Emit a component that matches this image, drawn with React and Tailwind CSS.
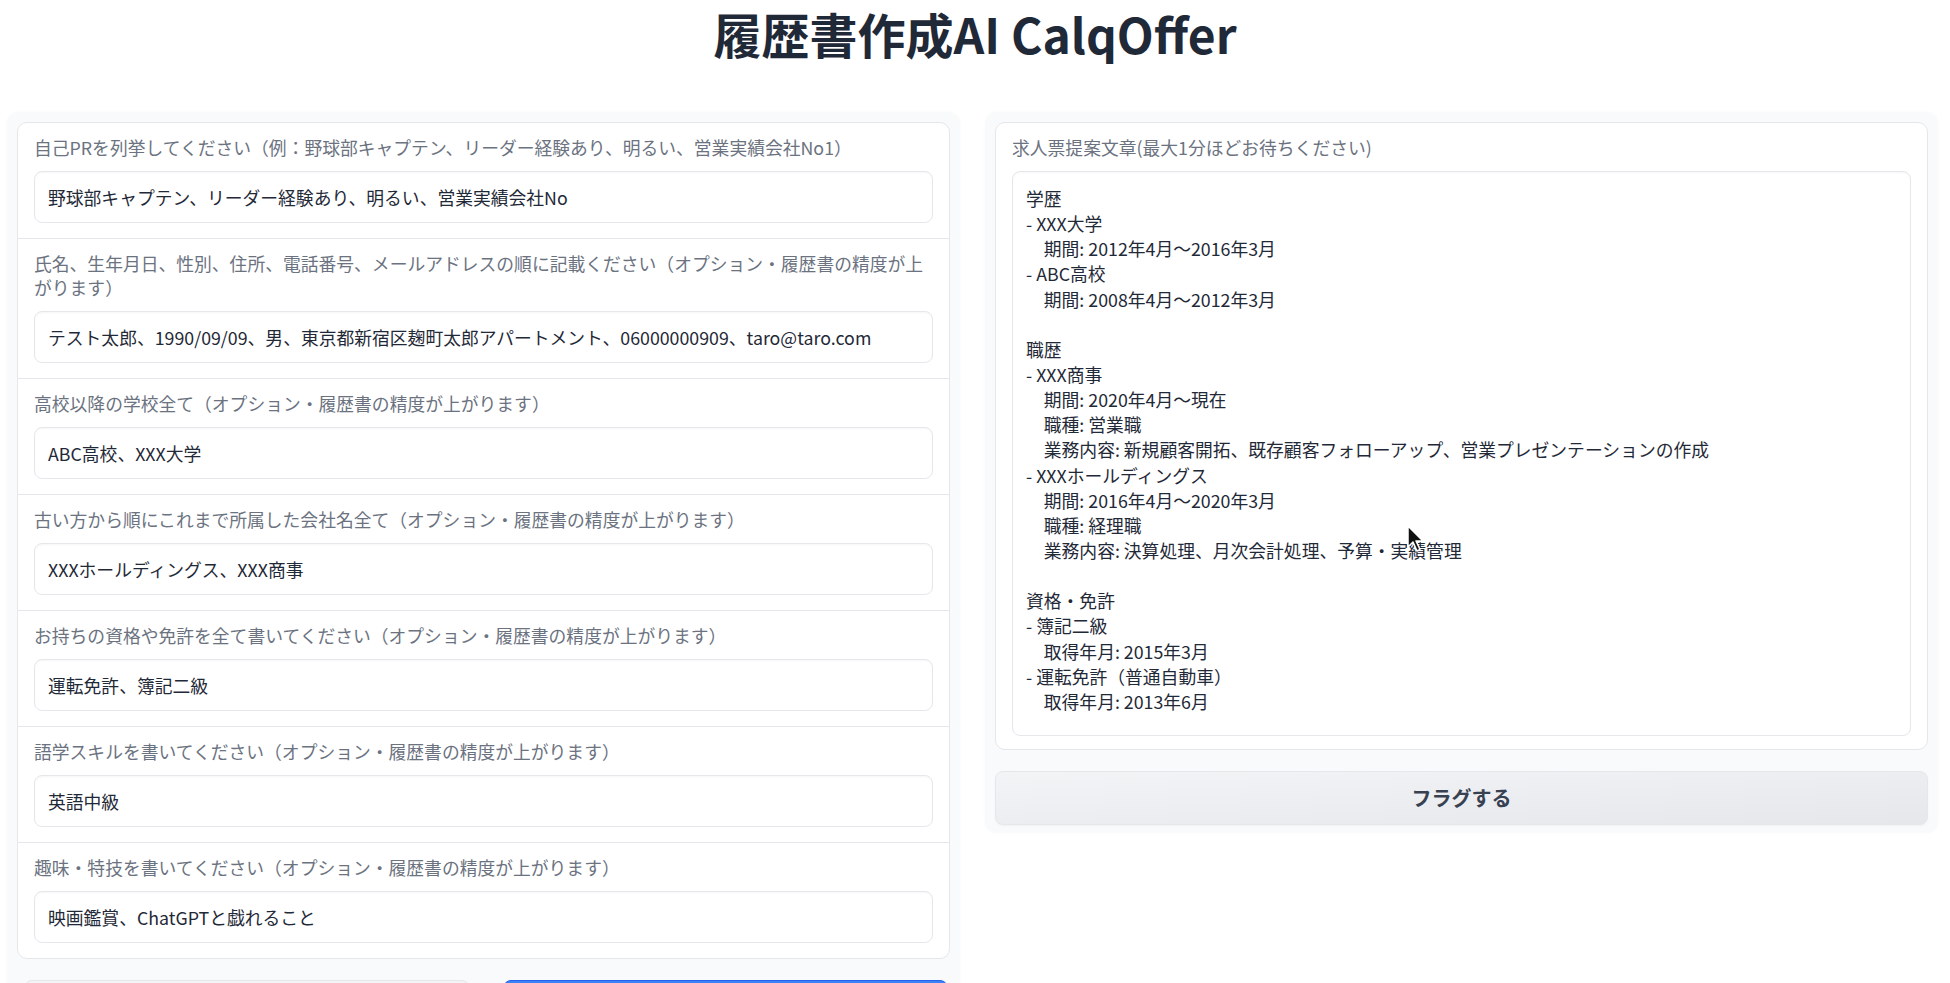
import { useState } from 'react';

const fields = [
  {
    label: '自己PRを列挙してください（例：野球部キャプテン、リーダー経験あり、明るい、営業実績会社No1）',
    value: '野球部キャプテン、リーダー経験あり、明るい、営業実績会社No',
  },
  {
    label: '氏名、生年月日、性別、住所、電話番号、メールアドレスの順に記載ください（オプション・履歴書の精度が上がります）',
    value: 'テスト太郎、1990/09/09、男、東京都新宿区麹町太郎アパートメント、06000000909、taro@taro.com',
  },
  { label: '高校以降の学校全て（オプション・履歴書の精度が上がります）', value: 'ABC高校、XXX大学' },
  { label: '古い方から順にこれまで所属した会社名全て（オプション・履歴書の精度が上がります）', value: 'XXXホールディングス、XXX商事' },
  { label: 'お持ちの資格や免許を全て書いてください（オプション・履歴書の精度が上がります）', value: '運転免許、簿記二級' },
  { label: '語学スキルを書いてください（オプション・履歴書の精度が上がります）', value: '英語中級' },
  { label: '趣味・特技を書いてください（オプション・履歴書の精度が上がります）', value: '映画鑑賞、ChatGPTと戯れること' },
];

const output = [
  '学歴',
  '- XXX大学',
  '　期間: 2012年4月～2016年3月',
  '- ABC高校',
  '　期間: 2008年4月～2012年3月',
  '',
  '職歴',
  '- XXX商事',
  '　期間: 2020年4月～現在',
  '　職種: 営業職',
  '　業務内容: 新規顧客開拓、既存顧客フォローアップ、営業プレゼンテーションの作成',
  '- XXXホールディングス',
  '　期間: 2016年4月～2020年3月',
  '　職種: 経理職',
  '　業務内容: 決算処理、月次会計処理、予算・実績管理',
  '',
  '資格・免許',
  '- 簿記二級',
  '　取得年月: 2015年3月',
  '- 運転免許（普通自動車）',
  '　取得年月: 2013年6月',
];

const Field = ({ label, value, last }) => (
  <div className={last ? 'px-[16px] pt-[12px] pb-[15px]' : 'border-b border-[#e5e7eb] px-[16px] pt-[12px] pb-[15px]'}>
    <span className="block text-[17.8px] leading-[24px] text-[#6b7280]">{label}</span>
    <div className="mt-[12px] flex h-[52px] items-center rounded-[8px] border border-[#e5e7eb] bg-white px-[13px] text-[17.8px] text-[#1f2937] shadow-[inset_0_1px_2px_rgba(0,0,0,0.04)]">
      {value}
    </div>
  </div>
);

const Cursor = () => (
  <svg className="absolute left-[394px] top-[353px]" width="18" height="28" viewBox="0 0 18 28">
    <path d="M1 1 L1 22 L6 17 L10 26 L13 24.5 L9 16 L16 16 Z" fill="#111" stroke="#fff" strokeWidth="1.5" strokeLinejoin="round" />
  </svg>
);

export default function App() {
  const [values] = useState(fields);

  return (
    <div className="min-h-screen bg-white font-['Noto_Sans_CJK_JP',sans-serif] text-[#1f2937]">
      <h1 className="text-center text-[48px] font-bold leading-[66px] text-[#1f2937]">履歴書作成AI CalqOffer</h1>

      <div className="mt-[46px] flex items-start gap-[25px] pl-[7px] pr-[12px]">
        {/* Input column */}
        <div className="w-[953px] rounded-[12px] bg-[#f9fafb] p-[10px] shadow-[0_0_3px_rgba(0,0,0,0.03)]">
          <div className="rounded-[10px] border border-[#e5e7eb] bg-white">
            {values.map((f, i) => (
              <Field key={i} label={f.label} value={f.value} last={i === values.length - 1} />
            ))}
          </div>
          <div className="mt-[21px] flex gap-[33px] pl-[7px] pr-[2px]">
            <button className="h-[54px] flex-1 rounded-[8px] border border-[#e5e7eb] bg-[#f3f4f6] text-[20px] font-bold text-[#374151]">
              クリア
            </button>
            <button className="h-[54px] flex-1 rounded-[8px] border border-[#2563eb] bg-[#3b82f6] text-[20px] font-bold text-white">
              送信
            </button>
          </div>
        </div>

        {/* Output column */}
        <div className="w-[953px] rounded-[12px] bg-[#f9fafb] px-[10px] pt-[10px] pb-[8px] shadow-[0_0_3px_rgba(0,0,0,0.03)]">
          <div className="rounded-[10px] border border-[#e5e7eb] bg-white px-[16px] pt-[12px] pb-[13px]">
            <span className="block text-[17.8px] leading-[24px] text-[#6b7280]">求人票提案文章(最大1分ほどお待ちください)</span>
            <div className="relative mt-[12px] h-[565px] rounded-[8px] border border-[#e5e7eb] bg-white px-[13px] pt-[14px] text-[17.8px] leading-[25.15px] text-[#1f2937] shadow-[inset_0_1px_2px_rgba(0,0,0,0.04)]">
              {output.map((line, i) => (
                <div key={i} className="h-[25.15px] whitespace-pre">{line}</div>
              ))}
              <Cursor />
            </div>
          </div>
          <button className="mt-[21px] h-[54px] w-full rounded-[8px] border border-[#e5e7eb] bg-linear-to-br from-[#f3f4f6] to-[#e5e7eb] text-[20px] font-bold text-[#374151] shadow-[0_1px_2px_rgba(0,0,0,0.04)]">
            フラグする
          </button>
        </div>
      </div>
    </div>
  );
}
